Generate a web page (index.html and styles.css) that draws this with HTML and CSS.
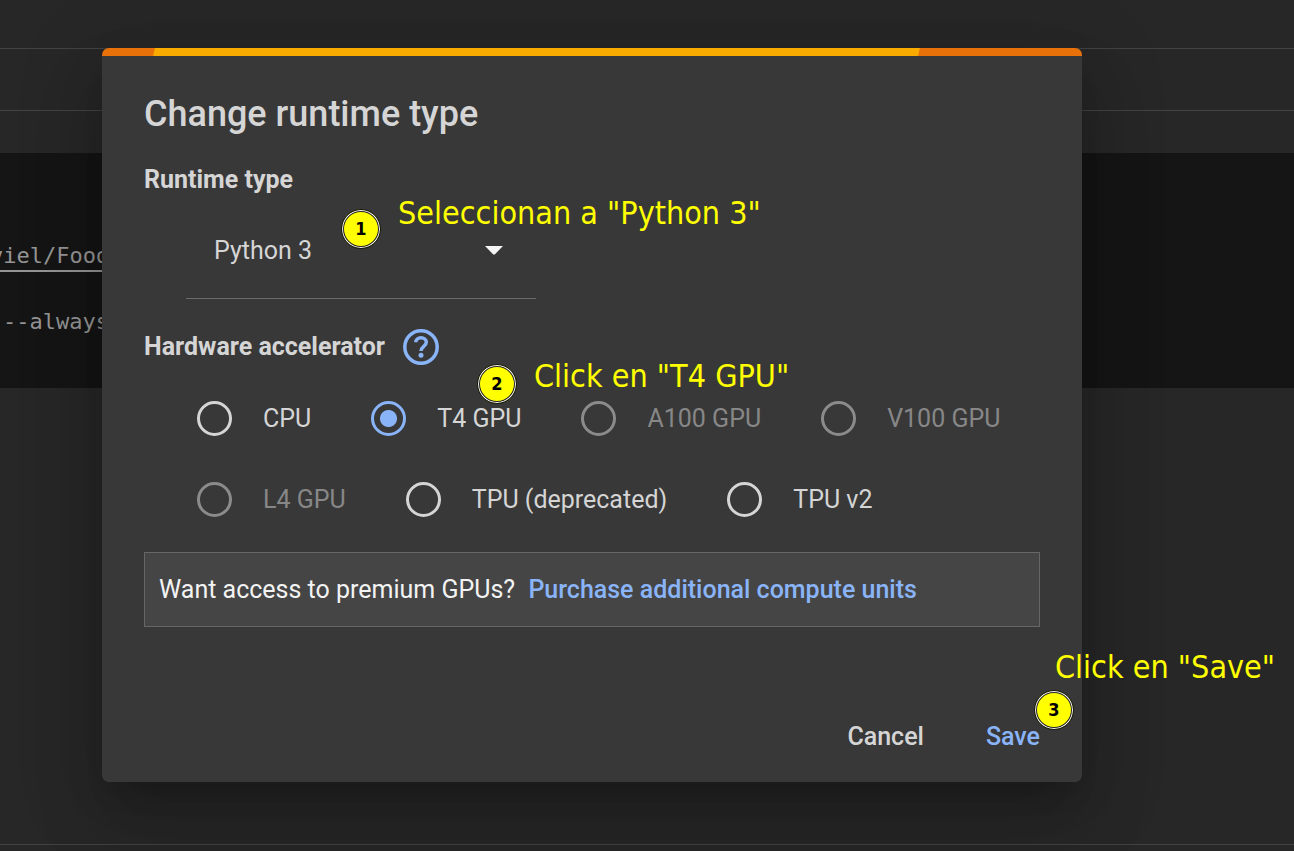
FILE: index.html
```html
<!DOCTYPE html>
<html lang="en">
<head>
<meta charset="utf-8">
<title>Change runtime type</title>
<link rel="stylesheet" href="styles.css">
</head>
<body>
<main class="notebook">
  <div class="toolbar"></div>
  <div class="toolbar toolbar-lower"></div>
  <pre class="code"><span class="code-line link-line">viel/Food</span>
<span class="code-line">--always</span></pre>
  <div class="output"></div>
</main>
<div class="overlay">
  <form class="dialog" role="dialog" aria-labelledby="title">
    <div class="progress"></div>
    <div class="content">
      <h1 class="title" id="title">Change runtime type</h1>
      <label class="heading" for="runtime">Runtime type</label>
      <div class="select-box">
        <select class="select" id="runtime"><option>Python 3</option></select>
        <svg class="arrow" viewBox="0 0 18 9" aria-hidden="true"><path d="M0 0h18L10 8.200Q9 9 8 8.200z"/></svg>
      </div>
      <fieldset class="accelerators" aria-labelledby="hardware">
        <div class="heading-row">
          <span class="heading" id="hardware">Hardware accelerator</span>
          <button class="help" type="button" aria-label="Help">
            <svg viewBox="0 0 36 36" aria-hidden="true"><circle cx="18" cy="18" r="16.200"/><path d="M12.800 13.300C12.800 10.500 15 8.800 18 8.800s5.300 1.700 5.300 4.500c0 4-5.300 4.200-5.300 8.700"/><circle class="help-dot" cx="18" cy="26.300" r="2.500"/></svg>
          </button>
        </div>
        <div class="options">
          <label class="option"><input class="radio" type="radio" name="hw">CPU</label>
          <label class="option"><input class="radio" type="radio" name="hw" checked>T4 GPU</label>
          <label class="option disabled"><input class="radio" type="radio" name="hw" disabled>A100 GPU</label>
          <label class="option disabled"><input class="radio" type="radio" name="hw" disabled>V100 GPU</label>
          <label class="option disabled"><input class="radio" type="radio" name="hw" disabled>L4 GPU</label>
          <label class="option"><input class="radio" type="radio" name="hw">TPU (deprecated)</label>
          <label class="option"><input class="radio" type="radio" name="hw">TPU v2</label>
        </div>
      </fieldset>
      <p class="premium">Want access to premium GPUs? <a class="purchase" href="#">Purchase additional compute units</a></p>
      <div class="actions">
        <button class="action" type="button">Cancel</button>
        <button class="action primary" type="button">Save</button>
      </div>
    </div>
    <span class="badge badge-one">1</span>
    <span class="note note-one">Seleccionan a "Python 3"</span>
    <span class="badge badge-two">2</span>
    <span class="note note-two">Click en "T4 GPU"</span>
    <span class="badge badge-three">3</span>
    <span class="note note-three">Click en "Save"</span>
  </form>
</div>
</body>
</html>
```
FILE: styles.css
```css
* { box-sizing: border-box; }
body {
  margin: 0;
  min-height: 100vh;
  position: relative;
  overflow: hidden;
  background: #272727;
  color: #d5d5d5;
  font: 25px/32px Roboto, sans-serif;
}
.notebook { display: flex; flex-direction: column; min-height: 100vh; }
.toolbar { height: 49px; border-bottom: 1px solid #434343; }
.toolbar-lower { height: 62px; margin-bottom: 42px; }
.code {
  margin: 0;
  height: 235px;
  padding: 86px 0 0;
  background: #151515;
  color: #959595;
  font: 22px/33px "DejaVu Sans Mono", monospace;
}
.code-line { display: block; margin-left: 3px; }
.link-line { width: 130px; height: 33px; margin-left: -10px; border-bottom: 2px solid #959595; }
.output { flex: 1; border-bottom: 1px solid #434343; margin-bottom: 6px; }

.overlay { position: absolute; inset: 0; padding: 48px 212px 69px 102px; }
.dialog {
  position: relative;
  min-height: 734px;
  border-radius: 7px;
  background: #383838;
  box-shadow: 0 19px 26px -12px rgba(0, 0, 0, .2), 0 42px 66px 5px rgba(0, 0, 0, .14), 0 16px 80px 14px rgba(0, 0, 0, .12);
}
.progress {
  position: relative;
  height: 8px;
  overflow: hidden;
  border-radius: 7px 7px 0 0;
  background: #e8710a;
}
.progress::before {
  content: "";
  position: absolute;
  inset: 0 17% 0 5%;
  margin: 0 -4px 0 3px;
  background: #f9ab00;
  transform: skewX(-12deg);
}
.content { display: flex; flex-direction: column; padding: 36px 42px 28px; }
.title { margin: 0 0 28px; font-size: 36px; line-height: 44px; font-weight: 500; }
.heading { font-weight: 700; }
.select-box { display: grid; width: 350px; margin: 8px 0 30px 42px; align-items: center; }
.select {
  grid-area: 1 / 1;
  appearance: none;
  height: 95px;
  padding: 0 28px;
  border: 0;
  border-bottom: 1px solid #6b6b6b;
  border-radius: 0;
  background: none;
  color: inherit;
  font: inherit;
}
.arrow { grid-area: 1 / 1; justify-self: end; width: 18px; height: 9px; margin: 0 33px 3px 0; fill: #f5f5f5; pointer-events: none; }
.accelerators { margin: 0; padding: 0; border: 0; min-width: 0; }
.heading-row { display: flex; align-items: center; gap: 18px; }
.help { width: 36px; height: 36px; padding: 0; border: 0; background: none; }
.help svg { display: block; fill: none; stroke: #8ab4f8; stroke-width: 3.500; }
.help .help-dot { fill: #8ab4f8; stroke: none; }
.options { display: flex; flex-wrap: wrap; gap: 46px 60px; padding: 36px 0 35px 53px; }
.option { display: flex; align-items: center; gap: 31px; height: 35px; }
.disabled { color: #878787; }
.radio {
  appearance: none;
  width: 35px;
  height: 35px;
  margin: 0;
  border: 3px solid #d5d5d5;
  border-radius: 50%;
}
.radio:disabled { border-color: #8b8b8b; }
.radio:checked { border-color: #8ab4f8; background: radial-gradient(circle, #8ab4f8 8px, transparent 9px); }
.premium {
  margin: 0;
  padding: 21px 14px 20px;
  border: 1px solid #666;
  background: #454545;
  color: #f3f3f3;
}
.purchase { margin-left: 7px; color: #8ab4f8; font-weight: 500; text-decoration: none; }
.actions { display: flex; justify-content: flex-end; gap: 62px; margin-top: 94px; }
.action { padding: 0; border: 0; background: none; color: inherit; font: inherit; font-weight: 500; }
.primary { color: #8ab4f8; }

.badge {
  position: absolute;
  width: 40px;
  height: 40px;
  border: 1px solid #111;
  border-radius: 50%;
  background: #ff0;
  box-shadow: inset 0 0 0 1px #fff, inset 0 0 0 2px #222;
  color: #000;
  font: bold 18px/38px "DejaVu Sans Condensed", "DejaVu Sans", sans-serif;
  text-align: center;
}
.note {
  position: absolute;
  color: #ff0;
  font: 32px/40px "DejaVu Sans Condensed", "Noto Sans", sans-serif;
  white-space: nowrap;
}
.badge-one { left: 239px; top: 161px; }
.note-one { left: 296px; top: 145px; }
.badge-two { left: 375px; top: 316px; }
.note-two { left: 432px; top: 308px; }
.badge-three { left: 932px; top: 642px; }
.note-three { left: 953px; top: 599px; }
```
